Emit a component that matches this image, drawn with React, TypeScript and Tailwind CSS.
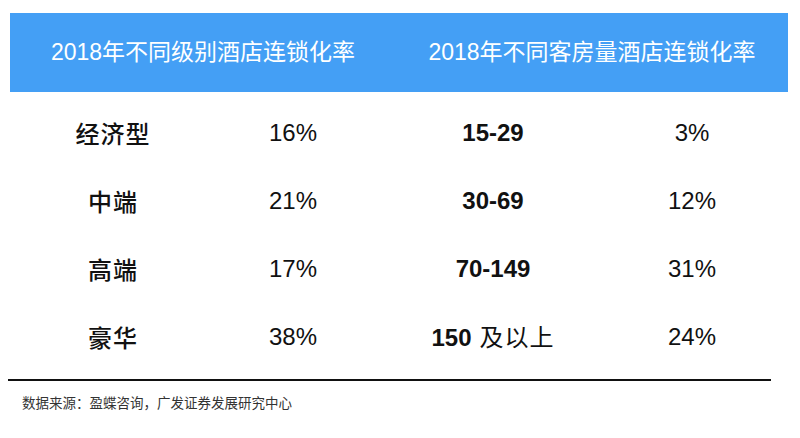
const rows = [
  { label: "经济型", rate: "16%", range: "15-29", suffix: "", rate2: "3%" },
  { label: "中端", rate: "21%", range: "30-69", suffix: "", rate2: "12%" },
  { label: "高端", rate: "17%", range: "70-149", suffix: "", rate2: "31%" },
  { label: "豪华", rate: "38%", range: "150", suffix: "及以上", rate2: "24%" },
];

const sans = "font-['Liberation_Sans','Noto_Sans_CJK_SC',sans-serif]";

export default function App() {
  return (
    <div className={`h-[438px] w-[800px] overflow-hidden bg-white pt-[13px] ${sans}`}>
      <div className="ml-[10px] flex h-[79px] w-[778px] items-center bg-[#449ff5] text-[23px] text-white">
        <div className="w-[386px] text-center">2018年不同级别酒店连锁化率</div>
        <div className="w-[392px] text-center">2018年不同客房量酒店连锁化率</div>
      </div>

      <div className="ml-[10px] pt-[7px] text-[24px] text-[#111]">
        {rows.map((r) => (
          <div key={r.label} className="grid h-[68px] grid-cols-[206px_154px_246px_152px] items-center text-center">
            <div className="font-['Noto_Sans_CJK_SC',sans-serif] font-medium tracking-[1px]">{r.label}</div>
            <div>{r.rate}</div>
            <div>
              <span className="font-bold">{r.range}</span>
              {r.suffix && <span className="ml-[8px] font-['Noto_Sans_CJK_SC',sans-serif] tracking-[1px]">{r.suffix}</span>}
            </div>
            <div>{r.rate2}</div>
          </div>
        ))}
      </div>

      <div className="ml-[8px] mt-[8px] h-[2px] w-[763px] bg-[#111]" />
      <div className="ml-[22px] mt-[14px] text-[13.5px] leading-[18px] text-[#333]">
        数据来源：盈蝶咨询，广发证券发展研究中心
      </div>
    </div>
  );
}
